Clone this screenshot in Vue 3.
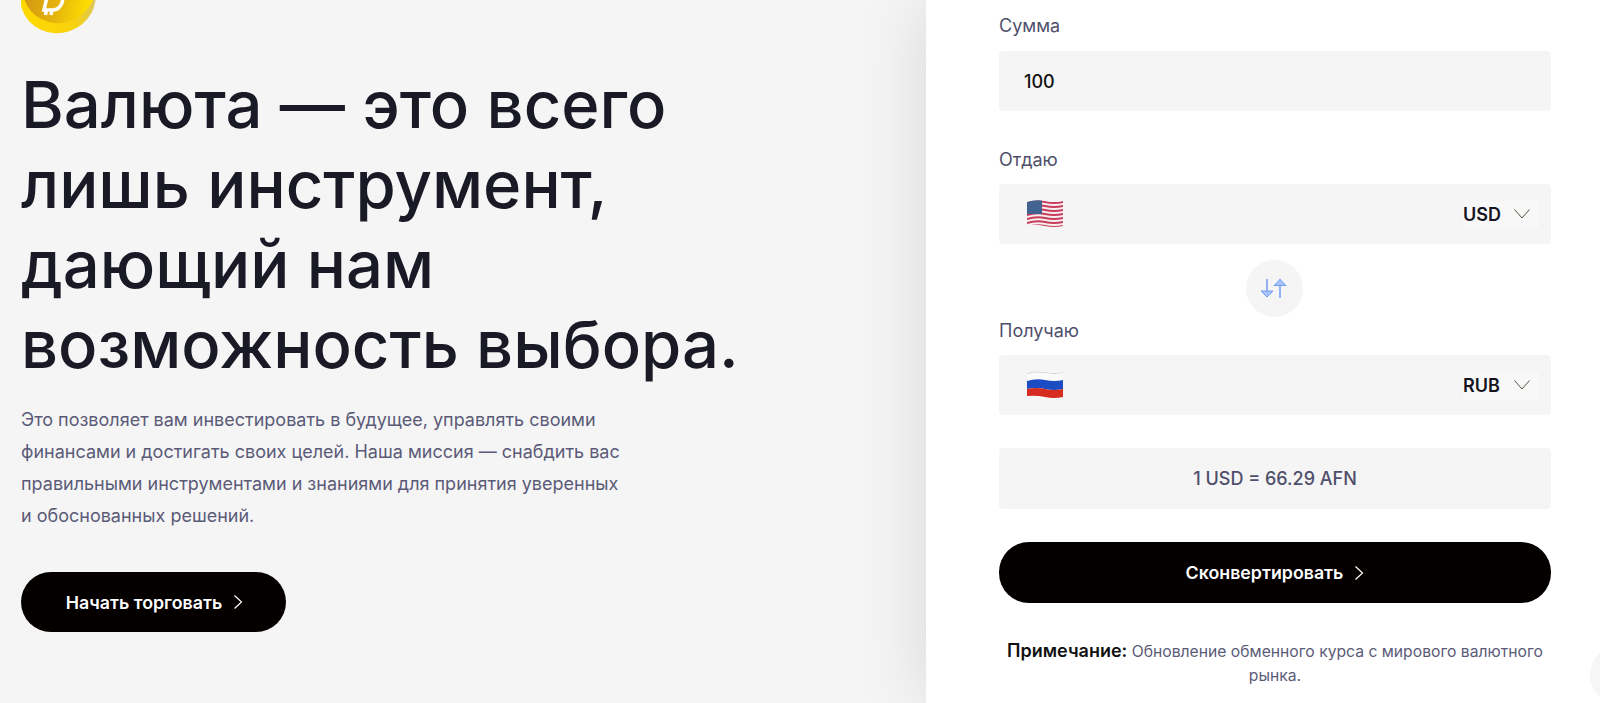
<template>
  <div class="page">
    <section class="hero">
      <svg class="coin" viewBox="0 0 75 36" width="75" height="36">
        <defs>
          <linearGradient id="coinFace" x1="0" y1="0" x2="1" y2="0.6">
            <stop offset="0" stop-color="#c88a14" />
            <stop offset="0.6" stop-color="#e4b20e" />
            <stop offset="1" stop-color="#ffe000" />
          </linearGradient>
          <linearGradient id="coinRim" x1="0" y1="0" x2="1" y2="0">
            <stop offset="0" stop-color="#ffd800" />
            <stop offset="0.6" stop-color="#f6d210" />
            <stop offset="1" stop-color="#d9c46a" />
          </linearGradient>
        </defs>
        <ellipse cx="37" cy="-3" rx="38" ry="36" fill="url(#coinRim)" transform="rotate(-18 37 -3)" />
        <ellipse cx="38" cy="-12" rx="36.500" ry="35" fill="url(#coinFace)" transform="rotate(-18 38 -12)" />
        <path class="coin-b" d="M26 -3 23 10H32Q38 10 41 3L42 -2M25.500 10 24.500 15M31 10 30 15" />
      </svg>
      <h1>Валюта — это всего лишь инструмент, дающий нам возможность выбора.</h1>
      <p class="lead">
        Это позволяет вам инвестировать в будущее, управлять своими финансами и достигать своих целей.
        Наша миссия — снабдить вас правильными инструментами и знаниями для принятия уверенных и обоснованных решений.
      </p>
      <button class="btn start">
        Начать торговать
        <svg class="chev" viewBox="0 0 10 16" width="10" height="16"><path d="M1.500 1.500 8.500 8 1.500 14.500" /></svg>
      </button>
    </section>

    <section class="panel">
      <form class="converter" @submit.prevent>
        <label class="label">Сумма</label>
        <div class="field amount">100</div>

        <label class="label give">Отдаю</label>
        <div class="field select">
          <svg class="flag" viewBox="0 0 36 27" width="36" height="27">
            <defs>
              <clipPath id="waveUs"><path d="M0 2Q9 -1 18 1T36 1V26Q27 28 18 26T0 25Z" /></clipPath>
            </defs>
            <g clip-path="url(#waveUs)">
              <rect width="36" height="27" fill="#f6eef0" />
              <path v-for="y in stripes" :key="y" class="stripe" :d="`M0 ${y}Q9 ${y - 3} 18 ${y - 1}T36 ${y - 1}`" />
              <rect width="15" height="14" fill="#41638f" />
            </g>
          </svg>
          <div class="code">
            USD
            <svg class="down" viewBox="0 0 16 10" width="16" height="10"><path d="M.5 .5 8 9 15.500 .5" /></svg>
          </div>
        </div>

        <div class="swap-row">
          <button class="swap" type="button">
            <svg viewBox="0 0 28 22" width="28" height="22">
              <path class="stem" d="M7 1V19M20 20V1" />
              <path class="head" d="M1 13H13L7 19ZM14 7.500H26L20 1.500Z" />
            </svg>
          </button>
        </div>

        <label class="label get">Получаю</label>
        <div class="field select">
          <svg class="flag" viewBox="0 0 36 27" width="36" height="27">
            <defs>
              <clipPath id="waveRu"><path d="M0 2Q9 -1 18 1T36 1V26Q27 28 18 26T0 25Z" /></clipPath>
            </defs>
            <g clip-path="url(#waveRu)">
              <rect width="36" height="27" fill="#fafafa" />
              <path d="M0 2.500Q9 -.5 18 1.500T36 1.500" fill="none" stroke="#d4d4d4" />
              <path d="M0 10Q9 7 18 9T36 9V18Q27 20 18 18T0 18Z" fill="#1b4cc4" />
              <path d="M0 18Q9 16 18 18T36 18V27H0Z" fill="#d62b20" />
            </g>
          </svg>
          <div class="code">
            RUB
            <svg class="down" viewBox="0 0 16 10" width="16" height="10"><path d="M.5 .5 8 9 15.500 .5" /></svg>
          </div>
        </div>

        <div class="field rate">1 USD = 66.29 AFN</div>

        <button class="btn convert">
          Сконвертировать
          <svg class="chev" viewBox="0 0 10 16" width="10" height="16"><path d="M1.500 1.500 8.500 8 1.500 14.500" /></svg>
        </button>

        <p class="note"><b>Примечание:</b> Обновление обменного курса с мирового валютного рынка.</p>
      </form>
      <div class="scroll-top"></div>
    </section>
  </div>
</template>

<script setup>
const stripes = [3, 7, 11, 15, 19, 23, 27]
</script>

<style>
html,
body {
  margin: 0;
  overflow: hidden;
}
</style>

<style scoped>
.page {
  display: flex;
  height: 703px;
  overflow: hidden;
  background: #f5f5f5;
  font-family: Inter, "Liberation Sans", sans-serif;
}

.hero {
  width: 926px;
  flex: none;
  box-sizing: border-box;
  padding-left: 21px;
  display: flex;
  flex-direction: column;
  align-items: flex-start;
}

.coin {
  display: block;
}

.coin-b {
  fill: none;
  stroke: #fff;
  stroke-width: 3.500;
}

h1 {
  margin: 29px 0 0;
  width: 760px;
  font-size: 65.200px;
  line-height: 80px;
  font-weight: 500;
  color: #1a1a27;
}

.lead {
  margin: 19px 0 0;
  width: 600px;
  font-size: 18px;
  line-height: 32px;
  color: #5b5b78;
}

.btn {
  display: flex;
  align-items: center;
  justify-content: center;
  gap: 11px;
  height: 60px;
  border: 0;
  border-radius: 30px;
  background: #040000;
  color: #fff;
  font-family: inherit;
  font-size: 17.800px;
  font-weight: 600;
}

.start {
  width: 265px;
  margin-top: 40px;
  padding-left: 8px;
}

.chev path {
  fill: none;
  stroke: #fff;
  stroke-width: 1.200;
}

.panel {
  position: relative;
  flex: 1;
  background: #fff;
  box-shadow: 0 0 70px rgba(0, 0, 0, 0.12);
}

.converter {
  width: 552px;
  margin-left: 73px;
  padding-top: 16px;
}

.label {
  display: block;
  height: 20px;
  font-size: 18px;
  line-height: 20px;
  color: #4f4f6b;
}

.field {
  box-sizing: border-box;
  height: 60px;
  margin-top: 15px;
  background: #f5f5f5;
  border-radius: 4px;
}

.amount {
  padding-left: 25px;
  font-size: 18px;
  font-weight: 500;
  line-height: 61px;
  color: #111;
}

.give {
  margin-top: 39px;
  margin-bottom: -1px;
}

.select {
  display: flex;
  align-items: center;
  justify-content: space-between;
  padding: 0 12px 0 28px;
}

.flag {
  display: block;
  margin-bottom: 2px;
}

.stripe {
  fill: none;
  stroke: #c83d5c;
  stroke-width: 2;
}

.code {
  display: flex;
  align-items: center;
  justify-content: space-between;
  box-sizing: border-box;
  width: 76px;
  height: 27px;
  padding-right: 9px;
  background: #f8f8f8;
  font-size: 18px;
  font-weight: 600;
  color: #14141f;
}

.down {
  display: block;
}

.down path {
  fill: none;
  stroke: #57503c;
  stroke-width: 1;
}

.swap-row {
  display: flex;
  justify-content: center;
  margin-top: 16px;
  padding-right: 2px;
}

.swap {
  display: flex;
  align-items: center;
  justify-content: center;
  width: 57px;
  height: 57px;
  padding: 0;
  border: 0;
  border-radius: 50%;
  background: #f5f5f5;
}

.stem {
  fill: none;
  stroke: #6f9bf5;
  stroke-width: 1.500;
}

.head {
  fill: #a9c4fa;
  stroke: #6f9bf5;
  stroke-width: 1;
}

.get {
  margin-top: 4px;
  margin-bottom: -1px;
}

.rate {
  height: 61px;
  margin-top: 33px;
  font-size: 18px;
  font-weight: 500;
  line-height: 61px;
  text-align: center;
  color: #4f4f6b;
}

.convert {
  width: 100%;
  height: 61px;
  margin-top: 33px;
}

.note {
  margin: 36px 0 0;
  font-size: 15.700px;
  line-height: 24px;
  text-align: center;
  color: #5b5b78;
}

.note b {
  font-size: 18px;
  font-weight: 600;
  color: #111;
}

.scroll-top {
  position: absolute;
  left: 664px;
  top: 645px;
  width: 60px;
  height: 60px;
  border-radius: 50%;
  background: #f6f6f6;
}
</style>
